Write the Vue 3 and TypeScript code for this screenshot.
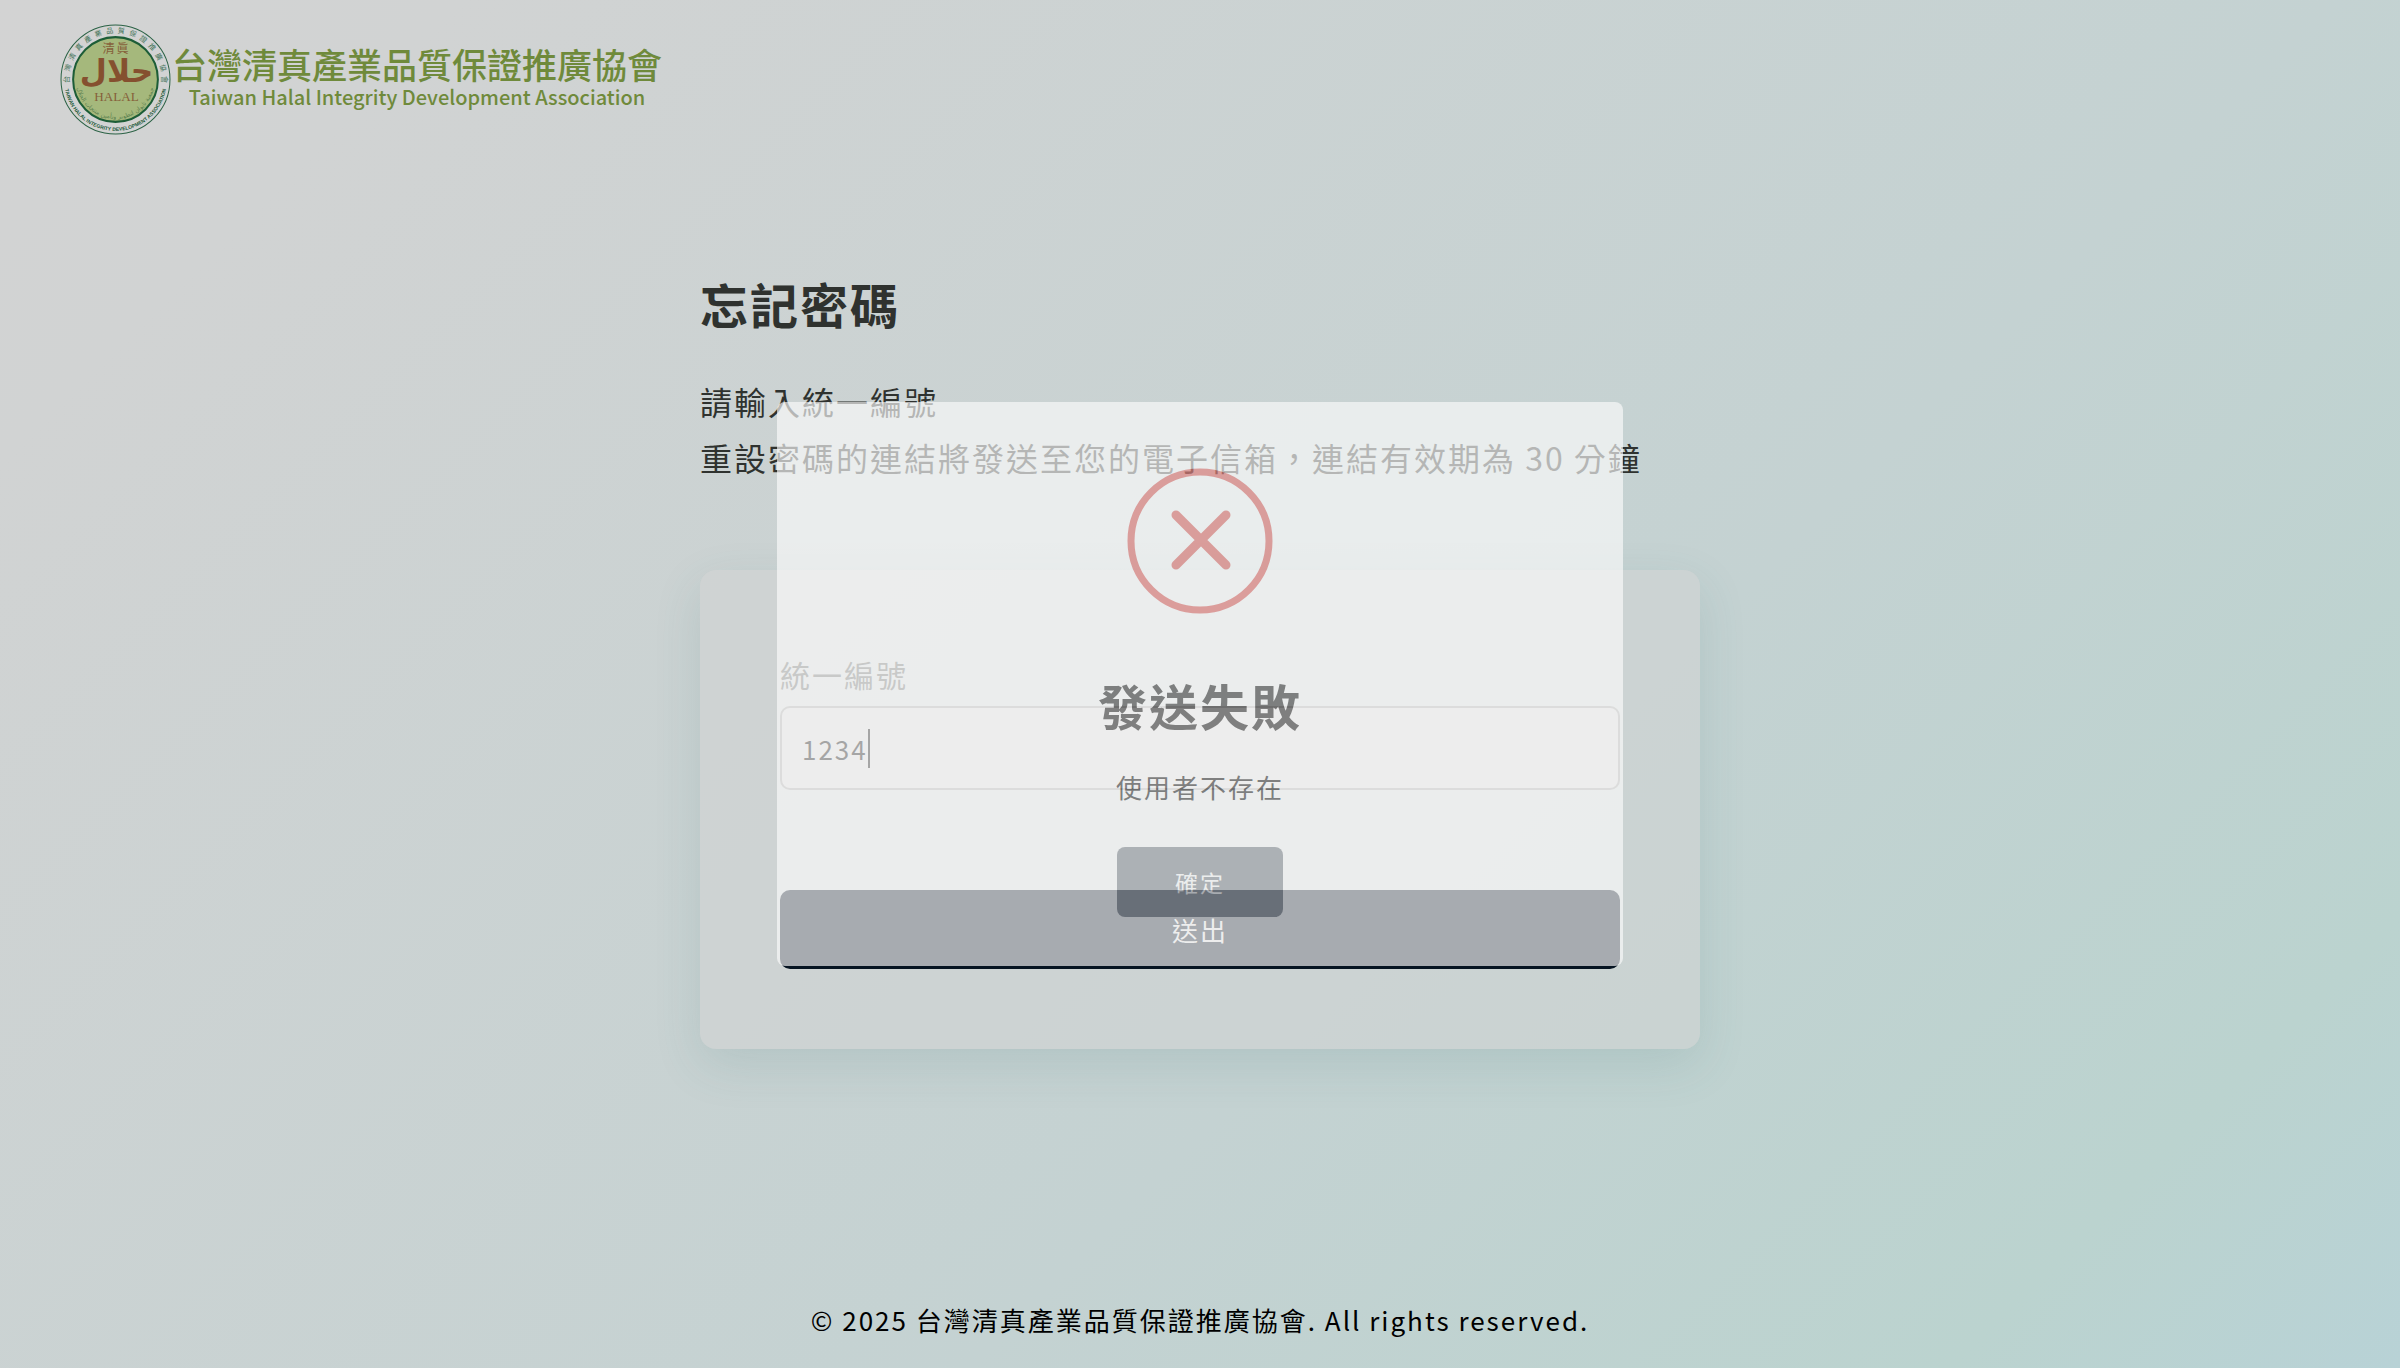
<script setup lang="ts">
import { ref } from 'vue'

const association = '台灣清真產業品質保證推廣協會'
const taxId = ref('1234')
const dialogOpen = ref(true)

const ringGlyphs = [...association].map((glyph, index, all) => ({
  glyph,
  angle: -90 + (180 / (all.length - 1)) * index,
}))

function submit(): void {
  dialogOpen.value = true
}
</script>

<template>
  <div class="page">
    <header class="header">
      <a class="brand" href="#">
        <svg class="seal" viewBox="0 0 110 110" aria-hidden="true">
          <defs>
            <path id="ring-lower" d="M4 55 A51 51 0 0 0 106 55" />
            <path id="inner-lower" d="M16 55 A39 39 0 0 0 94 55" />
          </defs>
          <circle cx="55" cy="55" r="54" fill="none" stroke="#2b6245" />
          <circle cx="55" cy="55" r="42" fill="#a5b87c" stroke="#1d5d37" stroke-width="2" />
          <g class="ring-text">
            <text
              v-for="(item, index) in ringGlyphs"
              :key="index"
              x="55"
              y="9"
              :transform="`rotate(${item.angle} 55 55)`"
            >{{ item.glyph }}</text>
          </g>
          <text class="ring-latin">
            <textPath href="#ring-lower" startOffset="50%">TAIWAN HALAL INTEGRITY DEVELOPMENT ASSOCIATION</textPath>
          </text>
          <text class="ring-arabic">
            <textPath href="#inner-lower" startOffset="50%">جمعية تايوان لتطوير وتأمين منتجات الحلال</textPath>
          </text>
          <text class="seal-cjk" x="56" y="29">清眞</text>
          <text class="seal-arabic" x="56" y="57">حلال</text>
          <text class="seal-latin" x="56" y="76">HALAL</text>
        </svg>
        <span class="brand-text">
          <span class="brand-zh">{{ association }}</span>
          <span class="brand-en">Taiwan Halal Integrity Development Association</span>
        </span>
      </a>
    </header>

    <main class="main">
      <h1 class="title">忘記密碼</h1>
      <p class="lead">請輸入統一編號<br />重設密碼的連結將發送至您的電子信箱，連結有效期為 30 分鐘</p>

      <form class="card" @submit.prevent="submit">
        <label class="label" for="tax-id">統一編號</label>
        <div class="field">
          <input id="tax-id" v-model="taxId" class="input" type="text" autocomplete="off" />
          <span class="caret" aria-hidden="true"></span>
        </div>
        <button class="submit" type="submit">送出</button>
      </form>
    </main>

    <footer class="footer">© 2025 {{ association }}. All rights reserved.</footer>

    <div v-if="dialogOpen" class="overlay">
      <div class="dialog" role="alertdialog" aria-labelledby="dialog-title" aria-describedby="dialog-text">
        <svg class="dialog-icon" viewBox="0 0 146 146" aria-hidden="true">
          <circle cx="73" cy="73" r="69" fill="none" stroke="#e3817e" stroke-width="7" />
          <path d="M49 47 L99 97 M99 47 L49 97" stroke="#e3817e" stroke-width="9" stroke-linecap="round" />
        </svg>
        <h2 id="dialog-title" class="dialog-title">發送失敗</h2>
        <p id="dialog-text" class="dialog-text">使用者不存在</p>
        <button class="confirm" type="button" @click="dialogOpen = false">確定</button>
      </div>
    </div>
  </div>
</template>

<style>
body {
  margin: 0;
}
</style>

<style scoped>
.page {
  box-sizing: border-box;
  display: flex;
  flex-direction: column;
  min-height: 100vh;
  background: linear-gradient(135deg, #d3d3d3 0%, #d1d3d3 12%, #c4d2d2 62%, #bbd3cf 88%, #b8d2d6 100%);
  color: #2f322f;
  font-family: "Noto Sans CJK TC", sans-serif;
  font-size: 26px;
  letter-spacing: 2px;
}

.header {
  display: flex;
  padding: 24px 60px;
}

.brand {
  display: flex;
  align-items: center;
  gap: 1px;
  color: #6f8a3b;
  letter-spacing: 0;
  text-decoration: none;
}

.seal {
  width: 111px;
  height: 111px;
}

.seal text {
  text-anchor: middle;
}

.ring-text {
  fill: #3f7257;
  font-size: 7px;
}

.ring-latin {
  fill: #1f5a3a;
  font-family: "Liberation Sans", sans-serif;
  font-size: 5px;
  font-weight: 700;
}

.ring-arabic {
  fill: #5c8150;
  font-family: "DejaVu Sans", sans-serif;
  font-size: 6px;
}

.seal-cjk {
  fill: #86603a;
  font-family: "Noto Sans CJK TC", sans-serif;
  font-size: 12px;
  letter-spacing: 2px;
}

.seal-arabic {
  fill: #85502f;
  font-family: "DejaVu Sans", sans-serif;
  font-size: 31px;
  font-weight: 700;
}

.seal-latin {
  fill: #86603a;
  font-family: "Liberation Serif", serif;
  font-size: 13px;
}

.brand-text {
  display: flex;
  flex-direction: column;
  align-items: center;
}

.brand-zh {
  font-size: 35px;
  font-weight: 500;
  line-height: 34px;
}

.brand-en {
  font-size: 20px;
  font-weight: 500;
  line-height: 32px;
}

.main {
  box-sizing: border-box;
  width: 100%;
  max-width: 1000px;
  margin: 0 auto;
  padding-top: 108px;
}

.title {
  margin: 0 0 34px;
  font-size: 48px;
  font-weight: 700;
  line-height: 72px;
}

.lead {
  margin: 0 0 85px;
  font-size: 32px;
  line-height: 56px;
}

.card {
  display: flex;
  flex-direction: column;
  padding: 80px;
  border-radius: 16px;
  background: rgba(211, 211, 211, 0.5);
  box-shadow: 0 16px 48px rgba(60, 110, 110, 0.14);
}

.label {
  margin-bottom: 8px;
  color: #676967;
  font-size: 30px;
  line-height: 48px;
}

.field {
  position: relative;
  display: flex;
  margin-bottom: 100px;
}

.input {
  box-sizing: border-box;
  width: 100%;
  height: 84px;
  padding: 0 20px;
  border: 2px solid #a0a2a0;
  border-radius: 10px;
  outline: none;
  background: #d3d3d3;
  color: #000;
  font: inherit;
  letter-spacing: inherit;
}

.caret {
  position: absolute;
  top: 23px;
  left: 88px;
  width: 2px;
  height: 39px;
  background: #000;
}

.submit {
  height: 79px;
  padding: 0;
  border: 0;
  border-radius: 10px;
  background: #061422;
  color: #d3d3d3;
  font: inherit;
  letter-spacing: inherit;
}

.footer {
  margin-top: auto;
  padding: 24px;
  color: #000;
  line-height: 48px;
  text-align: center;
}

.overlay {
  position: fixed;
  inset: 0;
  display: flex;
  align-items: center;
  justify-content: center;
}

.dialog {
  box-sizing: border-box;
  display: flex;
  flex-direction: column;
  align-items: center;
  width: 846px;
  max-width: 100%;
  padding: 66px 40px 49px;
  border-radius: 8px;
  background: #fafafa;
  color: #545454;
  opacity: 0.66;
}

.dialog-icon {
  width: 146px;
  height: 146px;
}

.dialog-title {
  margin: 54px 0 21px;
  font-size: 49px;
  font-weight: 600;
  line-height: 74px;
}

.dialog-text {
  margin: 0 0 36px;
  line-height: 48px;
}

.confirm {
  width: 166px;
  height: 70px;
  padding: 0;
  border: 0;
  border-radius: 8px;
  background: #9ca0a6;
  color: #fafafa;
  font: inherit;
  font-size: 23px;
  letter-spacing: inherit;
}
</style>
